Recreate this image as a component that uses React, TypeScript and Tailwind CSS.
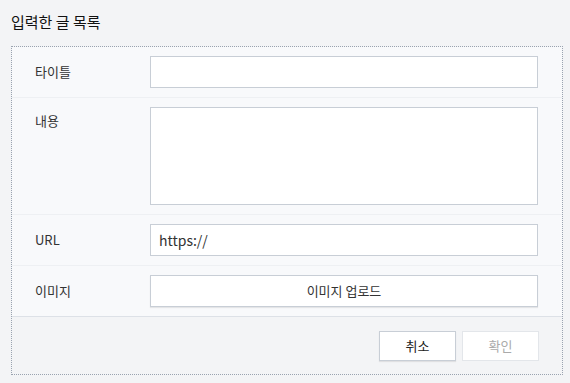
import React from "react";

const font = { fontFamily: '"Noto Sans CJK KR", "Noto Sans", sans-serif' };

function Row({ label, children, top, last }: { label: string; children: React.ReactNode; top?: boolean; last?: boolean }) {
  return (
    <div className={`flex ${top ? "items-start" : "items-center"} py-[9px] pr-[23px] ${last ? "border-b border-[#dde1e7]" : "border-b border-[#eef0f3]"}`}>
      <div className={`w-[138px] shrink-0 pl-[23px] text-[13px] text-[#333] ${top ? "pt-[4px]" : ""}`}>{label}</div>
      <div className="flex-1">{children}</div>
    </div>
  );
}

export default function App() {
  return (
    <div style={font} className="w-[570px] h-[383px] bg-[#f3f4f6] pt-[11px]">
      <h1 className="ml-[11px] text-[15px] font-normal text-[#111] leading-[22px]">입력한 글 목록</h1>
      <div className="ml-[11px] mt-[13px] w-[552px] h-[329px] border border-dotted border-[#9aa3b0] flex flex-col">
        <div className="bg-[#f8f9fb]">
          <Row label="타이틀">
            <input className="w-[388px] h-[32px] bg-white border border-[#c8ced6] outline-none px-2 text-[14px]" />
          </Row>
          <Row label="내용" top>
            <textarea className="block w-[388px] h-[98px] bg-white border border-[#c8ced6] outline-none resize-none p-2 text-[14px]" />
          </Row>
          <Row label="URL">
            <input
              defaultValue="https://"
              className="w-[388px] h-[32px] bg-white border border-[#c8ced6] outline-none px-[8px] text-[14px] text-[#333]"
            />
          </Row>
          <Row label="이미지" last>
            <button className="w-[388px] h-[32px] bg-white border border-[#c8ced6] shadow-[0_1px_1px_rgba(0,0,0,0.08)] text-[13px] text-[#333]">
              이미지 업로드
            </button>
          </Row>
        </div>
        <div className="flex justify-end gap-[6px] pr-[23px] pt-[14px]">
          <button className="w-[77px] h-[30px] bg-white border border-[#c8ced6] shadow-[0_1px_1px_rgba(0,0,0,0.08)] text-[13px] text-[#222]">
            취소
          </button>
          <button className="w-[77px] h-[30px] bg-white border border-[#e3e6ea] text-[13px] text-[#aaa]">
            확인
          </button>
        </div>
      </div>
    </div>
  );
}
